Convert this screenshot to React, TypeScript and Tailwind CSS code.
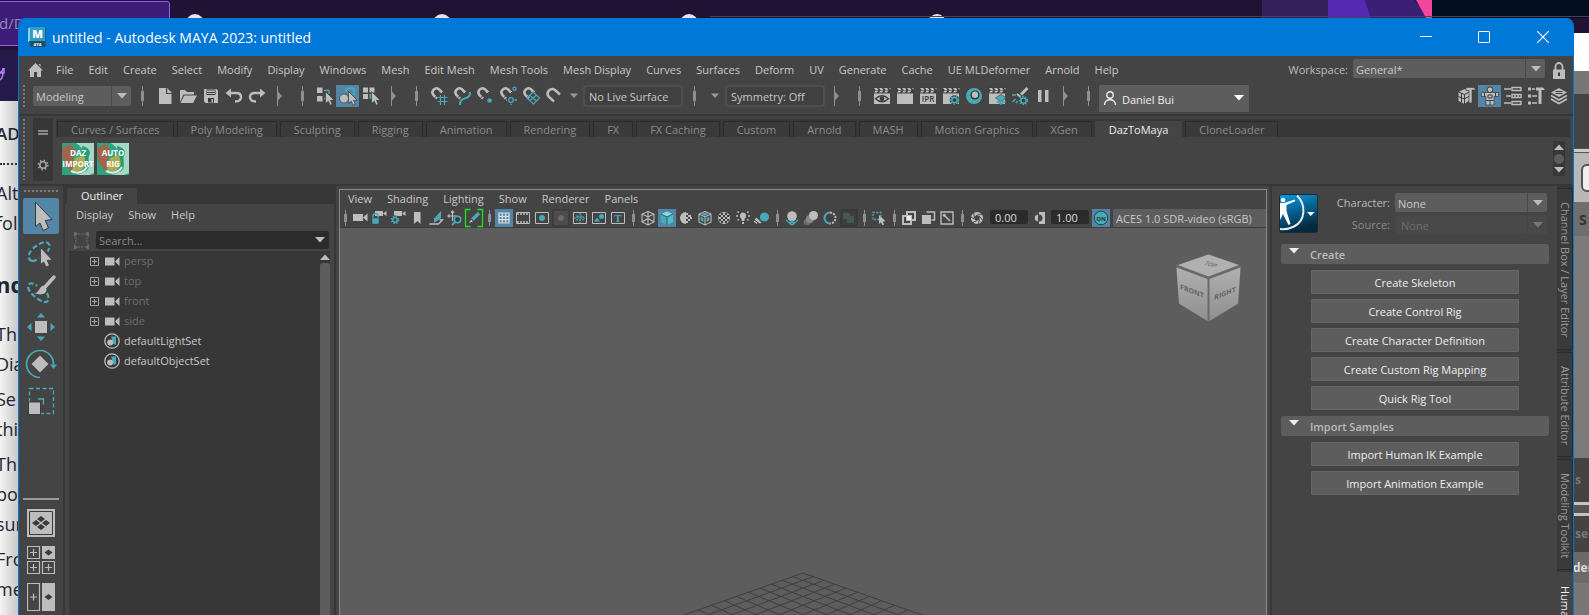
import type { ReactNode } from 'react'
import clsx from 'clsx'

const LIGHT = '#bdbdbd'
const TEAL = '#49a9b6'
const DARK = '#3a3a3a'

const menus = [
  'File', 'Edit', 'Create', 'Select', 'Modify', 'Display', 'Windows', 'Mesh', 'Edit Mesh', 'Mesh Tools',
  'Mesh Display', 'Curves', 'Surfaces', 'Deform', 'UV', 'Generate', 'Cache', 'UE MLDeformer', 'Arnold', 'Help',
]

const shelves = [
  'Curves / Surfaces', 'Poly Modeling', 'Sculpting', 'Rigging', 'Animation', 'Rendering', 'FX', 'FX Caching',
  'Custom', 'Arnold', 'MASH', 'Motion Graphics', 'XGen', 'DazToMaya', 'CloneLoader',
]

interface Tool {
  name: string
  icon: ReactNode
  active?: boolean
}

/* ---------- shared drawings ---------- */

function Svg({ size = 20, children }: { size?: number; children: ReactNode }) {
  return (
    <svg width={size} height={size} viewBox={`0 0 ${size} ${size}`} fill="none" aria-hidden="true" className="shrink-0">
      {children}
    </svg>
  )
}

function Down({ className }: { className?: string }) {
  return (
    <svg width="10" height="6" viewBox="0 0 10 6" aria-hidden="true" className={clsx('shrink-0', className)}>
      <path d="M0 0h10L5 5.5z" fill="currentColor" />
    </svg>
  )
}

const cursor = <path d="M10.5 5.5v12l2.8-2.2 1.8 4 2.2-1-1.8-3.9 3.6-.3z" fill={LIGHT} stroke={DARK} strokeWidth=".7" />

const magnet = (
  <>
    <path d="M8 12.5 4.3 8.8a4 4 0 0 1 5.6-5.6L13.5 7" stroke={LIGHT} strokeWidth="2.6" />
    <path d="m5.6 11.8 2.4-2M12 8l2.4-2.2" stroke={DARK} strokeWidth="1" />
  </>
)

const clapTop = (
  <>
    <path d="M1.5 1.5h17V7h-17z" fill={DARK} />
    <path d="M2 2h3l1.5 2H3.500zM7 2h3l1.500 2H8.500zM12 2h3l1.500 2h-3zM17 2h1.500v2zM2 6.500 3.500 4.500h3L5 6.500zM7 6.500l1.500-2h3l-1.500 2zM12 6.500l1.500-2h3l-1.500 2z" fill={LIGHT} />
  </>
)
const clap = (
  <>
    {clapTop}
    <path d="M2 7.500h16V18H2z" fill={LIGHT} />
  </>
)

function gear(cx: number, cy: number, r: number) {
  return (
    <>
      <circle cx={cx} cy={cy} r={r + 1.6} fill={DARK} />
      <circle cx={cx} cy={cy} r={r + 0.6} stroke={TEAL} strokeWidth="1.8" strokeDasharray="1.4 1.3" />
      <circle cx={cx} cy={cy} r={r - 0.6} stroke={TEAL} strokeWidth="1.5" />
    </>
  )
}

/* ---------- status line ---------- */

const fileTools: Tool[] = [
  {
    name: 'New scene',
    icon: <><path d="M4 2h7v6h5.500v10H4z" fill={LIGHT} /><path d="M12.200 2v5H17z" fill={LIGHT} /></>,
  },
  {
    name: 'Open scene',
    icon: <><path d="M2 16V4h5l2 2h7v2.500H5.500z" fill={LIGHT} /><path d="M6.300 9.500H19l-4 7.500H2.500z" fill={LIGHT} /></>,
  },
  {
    name: 'Save scene',
    icon: <><path d="M3 3h12.500L17 4.500V17H4.500L3 15.500z" fill={LIGHT} /><path d="M5.500 3.500h9V9h-9zM7 12h6v4.500H7z" fill={DARK} /><path d="M6 4.500h8v1.500H6zM6 7h8v1H6zM10.500 13H12v3h-1.500z" fill={LIGHT} /></>,
  },
  {
    name: 'Undo',
    icon: <><path d="M5 7h7.500c3 0 4.500 1.500 4.500 4s-2 4.500-6 4.500" stroke={LIGHT} strokeWidth="2.400" /><path d="m1.500 7 5.500-4.500v9z" fill={LIGHT} /></>,
  },
  {
    name: 'Redo',
    icon: <><path d="M15 7H7.500C4.500 7 3 8.500 3 11s2 4.500 6 4.500" stroke={LIGHT} strokeWidth="2.400" /><path d="M18.500 7 13 2.500v9z" fill={LIGHT} /></>,
  },
]

const selectTools: Tool[] = [
  {
    name: 'Select by hierarchy',
    icon: <><path d="M2 1.500h5.500V7H2zM2 10h5.500v5.500H2z" fill={LIGHT} /><path d="M9 4.500h5V8M9 12.500h2" stroke={TEAL} strokeWidth="1.300" />{cursor}</>,
  },
  {
    name: 'Select by object',
    active: true,
    icon: <><path d="M8 2.500h8V9M8 2.500V6" stroke={TEAL} strokeWidth="2" /><circle cx="6" cy="12.500" r="4.500" fill={LIGHT} stroke={DARK} strokeWidth=".7" />{cursor}</>,
  },
  {
    name: 'Select by component',
    icon: <><path d="M2 1.500h5V6.500H2zM8.500 1.500h5V6.500h-5zM2 8h5v5H2z" fill={LIGHT} /><path d="M8.500 8h3v5h-3z" fill={TEAL} />{cursor}</>,
  },
]

const snapTools: Tool[] = [
  { name: 'Snap to grids', icon: <>{magnet}<path d="M11.500 9v10M15.500 9v10M8.500 11.500h10M8.500 15.500h10" stroke={TEAL} strokeWidth="1.200" /></> },
  { name: 'Snap to curves', icon: <>{magnet}<path d="M8 19c0-6 3-6 6-7s4-2 4-6" stroke={TEAL} strokeWidth="2" /></> },
  { name: 'Snap to points', icon: <>{magnet}<circle cx="14.500" cy="14.500" r="2.300" fill={TEAL} /></> },
  { name: 'Snap to projected center', icon: <>{magnet}<circle cx="16.500" cy="2.800" r="1.600" stroke={TEAL} strokeWidth="1.200" /><circle cx="13" cy="14" r="2.300" stroke={TEAL} strokeWidth="1.300" /><path d="M13 17.500V19M16.500 14H19M9 14H8" stroke={TEAL} strokeWidth="1.300" /></> },
  { name: 'Snap to view planes', icon: <>{magnet}<path d="m12 6 6.500 6-6 6L6 12zM9 9.500l7 6M15 9.500l-6 5" stroke={TEAL} strokeWidth="1.200" /></> },
  { name: 'Make live', icon: <path d="M10 15.500 5 11C1 6 7 1 11 4l5 4.500" stroke={LIGHT} strokeWidth="2.500" /> },
]

const renderTools: Tool[] = [
  { name: 'Render view', icon: <>{clap}<path d="M3.500 12.700q6.500-6 13 0-6.500 6-13 0z" stroke={DARK} strokeWidth="1.300" /><circle cx="10" cy="12.700" r="2.300" fill={DARK} /></> },
  { name: 'Render frame', icon: clap },
  {
    name: 'IPR render',
    icon: <>{clap}<text x="10" y="16" textAnchor="middle" fontSize="8" fontWeight="600" fill={DARK}>IPR</text></>,
  },
  { name: 'Render settings', icon: <>{clap}{gear(13.5, 14, 3.2)}</> },
  { name: 'Hypershade', icon: <><circle cx="10" cy="10" r="8" fill={TEAL} /><circle cx="11" cy="9" r="4.600" fill="#333" /><circle cx="11" cy="8.800" r="3.200" fill={LIGHT} /></> },
  { name: 'Render setup', icon: <>{clap}<path d="m14 8.500 5.500 3.500-5.500 3.500L8.500 12z" fill={TEAL} stroke={DARK} strokeWidth=".6" /><path d="M8.500 15.500 14 19l5.500-3.500-5.500-1z" fill={TEAL} /></> },
  { name: 'Light editor', icon: <><path d="M17.500 2 11 8.500" stroke={LIGHT} strokeWidth="3" /><path d="m7 8 5 4" stroke={LIGHT} strokeWidth="2" /><path d="M2 9h4M2.500 16l3-3M6 17l1.500-2" stroke={TEAL} strokeWidth="1.500" />{gear(13.5, 14.5, 3.2)}</> },
  { name: 'Pause viewport', icon: <path d="M5 4h3.500v12H5zM12 4h3.500v12H12z" fill={LIGHT} /> },
]

const sidebarTools: Tool[] = [
  { name: 'Modeling toolkit', icon: <><path d="m1.500 6 6-3 5 2v9l-5 4-6-3z" fill={LIGHT} /><path d="m1.500 6 6 2.500L13 5.500M7.500 8.500V18M1.500 10.500l6 2.500 5-3M4.500 7v9.500" stroke={DARK} strokeWidth="1" /><path d="M9 1.500h8l2 2.500h-4v13h-3V4.500H9z" fill={LIGHT} stroke={DARK} strokeWidth=".6" /></> },
  { name: 'Human IK', active: true, icon: <><path d="M1.500 6.500h17v4h-4.500V19H6v-8.500H1.500z" fill={LIGHT} stroke={DARK} strokeWidth=".7" /><circle cx="10" cy="3.700" r="2.800" fill={LIGHT} stroke={DARK} strokeWidth="1" /><path d="M4.500 6.500v4M15.500 6.500v4M8 9h4v3H8zM10 14.500V19M6.500 14.500h7" stroke={DARK} strokeWidth="1" /></> },
  { name: 'Attribute editor', icon: <path d="M1 3h7M3 10h5M1 17h7M9 1.500h9v3H9zM9 15.500h9v3H9zM9 8.500h9v3H9zM12 8v4M15 8v4" stroke={LIGHT} strokeWidth="1.400" /> },
  { name: 'Tool settings', icon: <><path d="M2 1.500h3v3H2zM2 8.500h3v3H2zM2 15.500h3v3H2zM10 1.500h7l2 2.500h-3.500v14h-3V4.500H10z" fill={LIGHT} /><path d="M6 3h3M6 10h5M6 17h5" stroke={LIGHT} strokeWidth="1.300" /></> },
  { name: 'Channel box', icon: <><path d="m10 2 8 4.500-8 4.500-8-4.500z" fill={LIGHT} /><path d="M6.500 5.500h7M6.500 7.500h7" stroke={DARK} /><path d="m2 9.500 8 4.500 8-4.500M2 13l8 4.500 8-4.500" stroke={LIGHT} strokeWidth="1.700" /></> },
]

/* ---------- viewport panel toolbar ---------- */

const cube = 'M8 1.500 14 4v8l-6 3-6-3V4z'
const smallCam = <path d="M4 1h8v5H4zM12 3.500 15.500 1v5z" fill={LIGHT} />

const cameraTools: Tool[] = [
  { name: 'Select camera', icon: <path d="M1 4h10v7H1zM11 7.500 15.500 3.500v8z" fill={LIGHT} /> },
  { name: 'Lock camera', icon: <>{smallCam}<path d="M2 8V6a2.500 2.500 0 0 1 5 0v2" stroke={TEAL} strokeWidth="1.500" /><path d="M1 8h7v6H1z" fill={TEAL} stroke={DARK} strokeWidth=".5" /></> },
  { name: 'Camera attributes', icon: <>{smallCam}{gear(5, 10, 2.8)}</> },
  { name: 'Bookmarks', icon: <path d="M5 2h6.500v12L8.300 11 5 14z" fill={LIGHT} /> },
  { name: 'Image plane', icon: <><path d="M1.500 14h9l4-4h-3" stroke={LIGHT} strokeWidth="1.300" /><path d="M6 8.500 13 1v7l-7 5z" fill={TEAL} /></> },
  { name: 'Pan and zoom', icon: <><path d="M1 6h9M5.500 1v10M4 2.500 5.500 1 7 2.500M2.500 4.500 1 6l1.500 1.500" stroke={LIGHT} strokeWidth="1.200" /><circle cx="10.500" cy="9.500" r="3.200" fill={DARK} stroke={TEAL} strokeWidth="1.600" /><path d="m8 12-3 3" stroke={TEAL} strokeWidth="1.800" /></> },
  { name: 'Grease pencil', icon: <><path d="M4.500-.5h-5v17h5M11.500-.5h5v17h-5" stroke="#1fe01f" strokeWidth="1.300" /><path d="m13 3-6.500 6.500" stroke={TEAL} strokeWidth="3.600" /><path d="m5 9.500 2 2-4 1.500z" fill={LIGHT} /></> },
]

const gateTools: Tool[] = [
  { name: 'Grid', active: true, icon: <path d="M3 3h10v10H3zM3 6.300h10M3 9.700h10M6.300 3v10M9.700 3v10" stroke="#e0e0e0" strokeWidth="1.200" /> },
  { name: 'Film gate', icon: <><path d="M1.500 2.500h13v11h-13z" stroke={LIGHT} /><path d="M2 4h12M2 12h12" stroke={LIGHT} strokeWidth="1.500" strokeDasharray="2 1" /></> },
  { name: 'Resolution gate', icon: <><path d="M1.500 2.500h13v11h-13z" stroke={LIGHT} /><circle cx="8" cy="8" r="3" fill={TEAL} /></> },
  { name: 'Gate mask', icon: <><path d="M0 0h16v16H0z" fill="#4c4c4c" stroke="#333" /><circle cx="8" cy="8" r="3" fill="#6a6a6a" /></> },
  { name: 'Field chart', icon: <><path d="M1.500 2.500h13v11h-13z" stroke={LIGHT} /><path d="M8 3v10M2 8h12M5 6h6v4H5z" stroke={TEAL} strokeWidth="1.200" strokeDasharray="2 1" /></> },
  { name: 'Safe action', icon: <><path d="M1.500 2.500h13v11h-13z" stroke={LIGHT} /><circle cx="10.500" cy="6.500" r="2.500" fill={TEAL} /><path d="m3 11.500 3-4 3 4z" fill={TEAL} /></> },
  { name: 'Safe title', icon: <><path d="M1.500 2.500h13v11h-13z" stroke={LIGHT} /><text x="8" y="12" textAnchor="middle" fontSize="11" fontWeight="700" fill={TEAL} className="font-['Liberation_Serif',serif]">T</text></> },
]

const shadeTools: Tool[] = [
  { name: 'Wireframe', icon: <path d={`${cube}M2 4l6 3 6-3M8 7v8M8 1.500v6M2 12l6-3.500 6 3.500`} stroke={LIGHT} strokeWidth="1.100" /> },
  { name: 'Smooth shade', active: true, icon: <><path d={cube} fill={TEAL} /><path d="M8 1.500 14 4 8 7 2 4z" fill="#7fdbe6" /><path d="M8 7v8l6-3V4z" fill="#4fbccb" /><path d="M2 4l6 3 6-3M8 7v8" stroke="#2f5b6d" /></> },
  { name: 'Default material', icon: <><path d="M8 2a6 6 0 0 0 0 12z" fill={LIGHT} /><path d="M8 3h2v2H8zM10 5h2v2h-2zM12 5h1v2h-1zM8 7h2v2H8zM12 7h2v2h-2zM10 9h2v2h-2zM8 11h2v2H8z" fill={LIGHT} /></> },
  { name: 'Wireframe on shaded', icon: <><path d={cube} fill={DARK} /><path d="M8 2.500 11.500 4 8 6 4.500 4zM3.500 6.500 6.500 8v4l-3-1.500zM12.500 6.500 9.500 8v4l3-1.500z" fill={TEAL} /><path d={`${cube}M2 4l6 3 6-3M8 7v8`} stroke={LIGHT} strokeWidth="1.100" /></> },
  { name: 'Textured', icon: <><circle cx="8" cy="8" r="6" fill={LIGHT} /><path d="M5 3h2v2H5zM9 3h2v2H9zM3 5h2v2H3zM7 5h2v2H7zM11 5h2v2h-2zM5 7h2v2H5zM9 7h2v2H9zM3 9h2v2H3zM7 9h2v2H7zM11 9h2v2h-2zM5 11h2v2H5zM9 11h2v2H9z" fill={DARK} /></> },
  { name: 'Use all lights', icon: <><path d="M8 2.500a3.500 3.500 0 0 1 1.500 6.500v2h-3V9A3.500 3.500 0 0 1 8 2.500zM7 12h2v2H7z" fill={LIGHT} /><path d="M1 6h2M13 6h2M2.500 1.500l1.300 1.300M13.500 1.500l-1.300 1.300M2.500 10.500l1.300-1.300M13.500 10.500l-1.300-1.300" stroke={LIGHT} strokeWidth="1.400" /></> },
  { name: 'Shadows', icon: <><circle cx="10.500" cy="7" r="4.600" fill={TEAL} /><path d="m1 9 5 4M2 8l5 5M0 11l3 2.500" stroke={LIGHT} strokeWidth="1.200" /></> },
]

const effectTools: Tool[] = [
  { name: 'Ambient occlusion', icon: <><path d="m2 10 6 5 6-5M4 9l7 5M12 9l-7 5" stroke={TEAL} strokeWidth="1.200" /><circle cx="8" cy="6" r="4.800" fill={LIGHT} /></> },
  { name: 'Motion blur', icon: <><circle cx="4" cy="12" r="3.300" fill="#6c6c6c" /><circle cx="7" cy="9" r="4" fill="#888" /><circle cx="10.500" cy="5.500" r="4.500" fill={LIGHT} /></> },
  { name: 'Anti-aliasing', icon: <><path d="M8 2.500a5.500 5.500 0 0 0 0 11" stroke={TEAL} strokeWidth="2" /><path d="M8 2.500a5.500 5.500 0 0 1 0 11" stroke={LIGHT} strokeWidth="2" strokeDasharray="2 1.200" /></> },
  { name: 'Depth of field', icon: <><path d="M0 0h16v16H0z" fill="#3e3e3e" stroke="#333" /><path d="M2 3h7v6H2zM6 6h7v7H6z" fill="#45565a" /></> },
]

const isolateTools: Tool[] = [
  { name: 'Isolate select', icon: <><path d="M2 2.500h8v7H2z" stroke={TEAL} strokeWidth="1.300" strokeDasharray="2 1.300" /><path d="M8 5v9l2-1.700 1.400 2.900 1.700-.8-1.400-2.900 2.800-.2z" fill={LIGHT} /></> },
]

const xrayTools: Tool[] = [
  { name: 'X-Ray', icon: <><path d="M6 2h8v8H6zM2 6h8v8H2z" stroke={LIGHT} strokeWidth="2" /><path d="M6 6h4v4H6z" fill="#eee" /></> },
  { name: 'X-Ray joints', icon: <><path d="M6.500 2h8v8h-3" stroke={LIGHT} strokeWidth="1.500" /><path d="M2 5h9v9H2z" fill={LIGHT} /></> },
  { name: 'X-Ray active', icon: <><path d="M2 2h12v12H2z" stroke={LIGHT} strokeWidth="1.400" /><path d="m5 5 6 6" stroke={LIGHT} strokeWidth="1.600" /><circle cx="5.300" cy="5.300" r="1.500" fill={LIGHT} /></> },
]

/* ---------- small building blocks ---------- */

function Sep() {
  return (
    <span className="flex w-[22px] shrink-0 justify-center" aria-hidden="true">
      <svg width="3" height="20"><path d="M1 0h1v20H1zM0 5h3v10H0z" fill="#8f8f8f" /></svg>
    </span>
  )
}

function Fold() {
  return (
    <span className="flex w-[23px] shrink-0 justify-center" aria-hidden="true">
      <svg width="5" height="20"><path d="M0 0h1v20H0zM1 5.500 5 10l-4 4.500z" fill="#8f8f8f" /></svg>
    </span>
  )
}

function StatusTools({ tools }: { tools: Tool[] }) {
  return tools.map((t) => (
    <button
      key={t.name}
      aria-label={t.name}
      className={clsx('flex h-[22px] w-[23px] shrink-0 items-center justify-center', t.active && 'bg-[#5285a6]')}
    >
      <Svg>{t.icon}</Svg>
    </button>
  ))
}

function PanelTools({ tools }: { tools: Tool[] }) {
  return tools.map((t) => (
    <button
      key={t.name}
      aria-label={t.name}
      className={clsx('mr-px flex size-[18px] shrink-0 items-center justify-center', t.active && 'bg-[#5285a6]')}
    >
      <svg width="16" height="16" viewBox="0 0 16 16" fill="none" aria-hidden="true" className="shrink-0 overflow-visible">
        {t.icon}
      </svg>
    </button>
  ))
}

function PanelSep() {
  return (
    <span className="flex w-[11px] shrink-0 justify-center" aria-hidden="true">
      <svg width="3" height="16"><path d="M1 0h1v16H1zM0 4h3v8H0z" fill="#8f8f8f" /></svg>
    </span>
  )
}

interface ComboProps {
  label: string
  value: string
  className: string
  dim?: boolean
  id?: string
}

function Combo({ label, value, className, dim, id }: ComboProps) {
  return (
    <div className={clsx('relative rounded-[2px]', dim ? 'bg-[#494949] text-[#6e6e6e]' : 'bg-[#5d5d5d] text-[#c8c8c8]', className)}>
      <select
        id={id}
        aria-label={label}
        disabled={dim}
        className={clsx('h-full w-full appearance-none pt-0.5 pr-5 outline-none', dim ? 'pl-[6px]' : 'pl-[3px]')}
      >
        <option>{value}</option>
      </select>
      <span
        className={clsx(
          'pointer-events-none absolute inset-y-0 right-0 flex w-5 items-center justify-center border-l',
          dim ? 'border-[#464646] text-[#777]' : 'border-[#494949] text-[#bdbdbd]',
        )}
      >
        <Down />
      </span>
    </div>
  )
}

const dotsV = 'bg-[radial-gradient(circle,#7d7d7d_0.8px,transparent_1px)] bg-[size:4px_4px]'

/* ---------- desktop behind the window ---------- */

function Desktop() {
  return (
    <div className="absolute inset-0 overflow-hidden bg-[#1f1235]" aria-hidden="true">
      <svg className="absolute top-0 left-0" width="100%" height="18">
        <path d="M1262 0h66v18h-66z" fill="#35205e" />
        <path d="M1328 0h37l6 18h-43z" fill="#5429b4" />
        <path d="M1365 0h50l12 18h-56z" fill="#3b1f74" />
        <path d="M1416 0h16v18h-6z" fill="#f2479c" />
        <path d="M1432 0h400v18h-400z" fill="#020d20" />
        {[195, 442, 689, 937].map((x) => (
          <circle key={x} cx={x} cy="23" r="9" fill="#e8e4ec" />
        ))}
        <path d="M710 16.500h1200" stroke="#47425a" />
      </svg>
      <div className="absolute top-px -left-2 flex h-[45px] w-[178px] items-center rounded-[3px] border border-[#9a5ce6] bg-[#3c1d78] pl-1.5 font-['Open_Sans',sans-serif] text-[15px] text-[#9a86b8]">
        d/D
      </div>
      <div className="mt-[50px] h-[51px] w-5 bg-[#251a4a]">
        <svg width="10" height="51"><path d="M-4 20c4 4 7 2 7-2M-4 31c6 0 7-5 7-9M-1 23h5v-5" fill="none" stroke="#b47cf5" strokeWidth="1.500" /></svg>
      </div>
      <div className="h-full w-5 overflow-hidden bg-linear-to-r from-[#f4f4f4] to-[#c4c4c4] pt-[18px] font-['Open_Sans',sans-serif] text-[18px] leading-[30px] whitespace-nowrap text-[#1f2530] [&>p]:-ml-1 [&>p]:mb-[5px]">
        <p className="text-[17px] font-semibold">AD</p>
        <div className="mt-3.5 mb-[13px] h-0 border-t-2 border-dotted border-[#333]" />
        <p>Alt<br />fol</p>
        <p className="pt-[26px] text-[22px] font-bold">nd</p>
        <p className="pt-[15px]">Th<br />Dia</p>
        <p>Se<br />thi</p>
        <p>Th<br />po<br />sur</p>
        <p>Fro<br />me</p>
      </div>
      <div className="absolute top-0 right-0 flex h-full w-4 flex-col overflow-hidden pt-[33px] pl-1 font-['Open_Sans',sans-serif] text-[12px] font-bold [&>div]:-ml-1 [&>div]:shrink-0">
        <div className="h-[38px] bg-white" />
        <div className="h-[23px] bg-[#777]" />
        <div className="h-[54px] bg-[#444]" />
        <div className="h-[5px] border-y border-[#555] bg-[#ccc]" />
        <div className="flex h-[49px] items-center bg-[#b8b8b8] pl-2">
          <span className="h-7 w-6 shrink-0 rounded-[6px] border-2 border-[#555] bg-[#eee]" />
        </div>
        <div className="flex h-[34px] items-center bg-[#6e6e6e] pl-1.5 text-[14px] text-[#333]">S</div>
        <div className="h-[222px] bg-[#7b7b7b]" />
        <div className="flex h-[44px] items-center bg-[#434343] pl-0.5 text-[#777]">s</div>
        <div className="h-[14px] border-y-3 border-[#c4c4c4] bg-[#555]" />
        <div className="flex h-[36px] items-center bg-[#434343] pl-0.5 text-[#777]">se</div>
        <div className="flex h-[31px] items-center bg-[#6a6a6a] text-[#ddd]">der</div>
        <div className="h-16 bg-[#777]" />
      </div>
    </div>
  )
}

/* ---------- window parts ---------- */

function TitleBar() {
  return (
    <header className="flex h-[38px] shrink-0 items-center bg-[#0078d7] pl-2 text-white">
      <svg width="20" height="20" viewBox="0 0 20 20" aria-hidden="true">
        <path d="M1 1.500 4 0v14l-3 1z" fill="#8fd3e4" />
        <path d="M3 0h15v14H3z" fill="#2e9fc4" />
        <path d="M18 0l1 1v18l-1 1z" fill="#1c5f80" />
        <path d="M2 14h16v6H4z" fill="#1d4e66" />
        <text x="10.500" y="11" textAnchor="middle" fontSize="11" fontWeight="800" fill="#fff">M</text>
        <text x="10.500" y="18.500" textAnchor="middle" fontSize="4" fontWeight="700" fill="#fff">AYA</text>
      </svg>
      <h1 className="ml-[5px] pt-0.5 text-[14px]">untitled - Autodesk MAYA 2023: untitled</h1>
      <div className="ml-auto flex h-full">
        <button aria-label="Minimize" className="flex w-[58px] items-center justify-center">
          <svg width="12" height="12"><path d="M0 5.500h12" stroke="#fff" /></svg>
        </button>
        <button aria-label="Maximize" className="flex w-[58px] items-center justify-center">
          <svg width="12" height="12"><rect x=".5" y=".5" width="11" height="11" rx=".5" fill="none" stroke="#fff" /></svg>
        </button>
        <button aria-label="Close" className="flex w-[60px] items-center justify-center">
          <svg width="12" height="12"><path d="m0 0 12 12M12 0 0 12" stroke="#fff" strokeWidth="1.200" /></svg>
        </button>
      </div>
    </header>
  )
}

function MenuBar() {
  return (
    <div className="flex h-7 shrink-0 items-center pr-2 pl-2">
      <button aria-label="Home" className="mr-[13px]">
        <svg width="15" height="14" viewBox="0 0 15 14" aria-hidden="true">
          <path d="M7.500 0 15 7.500h-2V14H9V9H6v5H2V7.500H0zM10.500 1h2v3z" fill={LIGHT} />
        </svg>
      </button>
      <nav className="flex gap-[15px] whitespace-nowrap text-[#c8c8c8]">
        {menus.map((m) => (
          <button key={m}>{m}</button>
        ))}
      </nav>
      <label htmlFor="workspace" className="ml-auto text-[#bbb]">Workspace:</label>
      <Combo id="workspace" label="Workspace" value="General*" className="mb-[3px] ml-[5px] h-[19px] w-[192px]" />
      <button aria-label="Lock workspace" className="ml-2">
        <svg width="12" height="17" viewBox="0 0 12 17" aria-hidden="true">
          <path d="M2.500 8V4.500a3.500 3.500 0 0 1 7 0V8" fill="none" stroke={LIGHT} strokeWidth="1.800" />
          <path d="M0 7.500h12V17H0z" fill={LIGHT} />
          <path d="M5 10.500h2v3.500H5z" fill={DARK} />
        </svg>
      </button>
    </div>
  )
}

const field = 'h-[22px] w-[100px] shrink-0 rounded-[3px] border-2 border-[#4f4f4f] bg-[#404040] px-1 pt-px text-[#c8c8c8] outline-none'

function StatusLine() {
  return (
    <div className="flex h-[30px] shrink-0 items-center pr-[3px] pb-1.5 pl-0.5">
      <div className={clsx('h-6 w-[5px] shrink-0', dotsV)} />
      <Combo label="Menu set" value="Modeling" className="ml-1.5 h-5 w-[98px] shrink-0" />
      <Sep />
      <StatusTools tools={fileTools} />
      <Fold />
      <Sep />
      <StatusTools tools={selectTools} />
      <Fold />
      <Sep />
      <StatusTools tools={snapTools} />
      <button aria-label="Live surface options" className="flex w-[18px] shrink-0 justify-center text-[#999]">
        <Down className="w-2" />
      </button>
      <input aria-label="Live surface" defaultValue="No Live Surface" className={field} />
      <Sep />
      <button aria-label="Symmetry options" className="flex w-5 shrink-0 justify-center text-[#999]">
        <Down className="w-2" />
      </button>
      <input aria-label="Symmetry" defaultValue="Symmetry: Off" className={field} />
      <Fold />
      <Sep />
      <StatusTools tools={renderTools} />
      <Fold />
      <Sep />
      <button className="mt-px flex h-[27px] w-[150px] shrink-0 items-center self-start bg-[#5d5d5d] pr-[5px] pl-1 text-[#eee]">
        <svg width="14" height="15" viewBox="0 0 14 15" fill="none" stroke="#eee" strokeWidth="1.400" aria-hidden="true">
          <circle cx="7" cy="4" r="3.200" />
          <path d="M1.500 14c0-7 11-7 11 0" />
        </svg>
        <span className="ml-[5px] pt-0.5 text-[11px]">Daniel Bui</span>
        <Down className="mb-0.5 ml-auto text-white" />
      </button>
      <div className="ml-auto flex">
        <StatusTools tools={sidebarTools} />
      </div>
    </div>
  )
}

function DazIcon({ label, lines }: { label: string; lines: [string, string] }) {
  return (
    <button aria-label={label}>
      <svg width="32" height="32" viewBox="0 0 32 32" aria-hidden="true" className="overflow-hidden">
        <path d="M0 0h32v32H0z" fill="#2ea380" />
        <path d="M14 0h18v30l-5 2H14c10-2 12-6 12-12s-4-14-12-20z" fill="#a5d8c4" />
        <path d="M20 3c8 2 9 6 7 10s3 12-4 16" fill="#249c78" />
        <path d="M0 5l8-4 5 5-2 11 5 5-4 6-6-2-5-9z" fill="#a1644c" />
        <path d="M13 15l9-3 2 9-6 8-8-1z" fill="#a9ac50" />
        <path d="M9 28c8 4 14 0 16-4" stroke="#d9efe6" strokeWidth="2" fill="none" />
        <text x="16" y="13" textAnchor="middle" fontSize="8" fontWeight="700" fill="#fff">{lines[0]}</text>
        <text x="16" y="24" textAnchor="middle" fontSize="8" fontWeight="700" fill="#fff">{lines[1]}</text>
      </svg>
    </button>
  )
}

function Shelf() {
  return (
    <div className="flex h-[68px] shrink-0 pt-0.5 pr-[3px] pl-0.5">
      <div className={clsx('h-[62px] w-[5px] shrink-0', dotsV)} />
      <div className="ml-1.5 flex h-[63px] w-5 shrink-0 flex-col items-center bg-[#373737] pt-3">
        <button aria-label="Shelf tabs"><svg width="10" height="5"><path d="M0 0h10v2H0zM0 3h10v2H0z" fill="#8a8a8a" /></svg></button>
        <button aria-label="Shelf options" className="mt-auto mb-2.5">
          <svg width="12" height="12" fill="none" stroke="#a5a5a5">
            <circle cx="6" cy="6" r="3.200" strokeWidth="1.500" />
            <circle cx="6" cy="6" r="4.700" strokeWidth="1.600" strokeDasharray="1.500 2.200" />
          </svg>
        </button>
      </div>
      <div className="mt-px ml-[3px] flex min-w-0 flex-1 flex-col">
        <div role="tablist" className="flex h-[18px] items-end gap-[3px] bg-[#373737] pl-px whitespace-nowrap">
          {shelves.map((s) => (
            <button
              key={s}
              role="tab"
              aria-selected={s === 'DazToMaya'}
              className={clsx(
                'h-4 rounded-t-[2px] border border-b-0 px-[13px] leading-4',
                s === 'DazToMaya' ? 'border-[#444] bg-[#444] text-[#eee]' : 'border-[#2b2b2b] bg-[#3a3a3a] text-[#8c8c8c]',
              )}
            >
              {s}
            </button>
          ))}
        </div>
        <div className="flex gap-[3px] pt-[5px] pr-[5px] pl-1.5">
          <DazIcon label="Daz Import" lines={['DAZ', 'IMPORT']} />
          <DazIcon label="Auto Rig" lines={['AUTO', 'RIG']} />
          <div className="-mt-px ml-auto flex h-[35px] w-3 flex-col items-center justify-between bg-[#373737] py-[3px] text-[#bdbdbd]">
            <button aria-label="Previous shelf row"><Down className="rotate-180" /></button>
            <span className="size-[10px] rounded-full bg-[#5d5d5d]" />
            <button aria-label="Next shelf row"><Down /></button>
          </div>
        </div>
      </div>
    </div>
  )
}

const toolbox: Tool[] = [
  {
    name: 'Select tool',
    active: true,
    icon: <path d="M12.500 4v24.500l4.500-3.500 3 7.500 5.500-2.500-3.200-7.500 6.700-1z" fill={LIGHT} stroke={DARK} strokeWidth="1" />,
  },
  {
    name: 'Lasso tool',
    icon: <><path d="M9 26c-4-1-5-7 1-12.500s13-8 15.500-5c2 2 1 5-1 8M9 26c3 0 5-1 7-3" stroke={TEAL} strokeWidth="2.200" strokeDasharray="5 2.500" /><path d="M17.500 12.500v17l3.200-2.500 2.300 5 3.500-1.600-2.300-5 5-.4z" fill={LIGHT} stroke={DARK} strokeWidth=".8" /></>,
  },
  {
    name: 'Paint selection tool',
    icon: <><path d="M24 21c3 6 1 10-3 9S6 22 5 15c0-5 6-4 9-1" stroke={TEAL} strokeWidth="2.200" strokeDasharray="5 2.500" /><path d="M31 5 22 15" stroke={LIGHT} strokeWidth="3.500" strokeLinecap="round" /><path d="M20 13.500 23.500 17c0 6-6 6-12 4.500 5-1 4-6 8.500-8z" fill={LIGHT} /></>,
  },
  {
    name: 'Move tool',
    icon: <><path d="M12 12h12v12H12z" fill={LIGHT} /><path d="m18 4 4 4.500h-8zM18 32l4-4.500h-8zM4 18l4.500-4v8zM32 18l-4.500-4v8z" fill={TEAL} /></>,
  },
  {
    name: 'Rotate tool',
    icon: <><path d="M17 31.500a13.500 13.500 0 1 1 13.500-13" stroke={TEAL} strokeWidth="1.700" /><path d="m30.500 23-3.500-4.500h7z" fill={TEAL} /><path d="m17 9.500 8.500 8.500-8.500 8.500L8.500 18z" fill={LIGHT} /></>,
  },
  {
    name: 'Scale tool',
    icon: <><path d="M6.500 5.500h24v25h-24z" stroke={TEAL} strokeWidth="1.300" strokeDasharray="4 2.500" /><path d="M15 16h5.500v5.500" stroke={TEAL} strokeWidth="1.300" /><path d="M5.500 19h12v12.500h-12z" fill={LIGHT} stroke={DARK} /></>,
  },
]

const layouts: Tool[] = [
  {
    name: 'Single view',
    icon: <><path d="M0 0h28v28H0z" fill={LIGHT} /><path d="M2.500 2.500h23v23h-23z" stroke={DARK} /><path d="m14 7 4 3-4 3-4-3zM14 15l4 3-4 3-4-3zM9 11l4 3-4 3-4-3zM19 11l4 3-4 3-4-3z" fill={DARK} /></>,
  },
  {
    name: 'Four view',
    icon: <><path d="M.5.500h12v12H.5zM.5 15.500h12v12H.5zM15.500 15.500h12v12h-12zM6.500 3v7M3 6.500h7M6.500 18v7M3 21.500h7M21.500 18v7M18 21.500h7" stroke={LIGHT} strokeWidth="1.200" /><path d="M15 0h13v13H15z" fill={LIGHT} /><path d="m21.500 3.500 4 3-4 3-4-3z" fill={DARK} /></>,
  },
  {
    name: 'Outliner and view',
    icon: <><path d="M.5.500h12v27H.5zM6.500 10.500v7M3 14h7" stroke={LIGHT} strokeWidth="1.200" /><path d="M15 0h13v28H15z" fill={LIGHT} /><path d="m21.500 11 4 3-4 3-4-3z" fill={DARK} /></>,
  },
]

function Toolbox() {
  return (
    <aside className="flex w-[43px] shrink-0 flex-col pt-[3px] pl-[3px]">
      <div className={clsx('mb-1 h-[5px] w-9', dotsV)} />
      <div className="flex flex-col gap-px">
        {toolbox.map((t) => (
          <button key={t.name} aria-label={t.name} className={clsx('size-9 rounded-[2px]', t.active && 'bg-[#5285a6]')}>
            <Svg size={36}>{t.icon}</Svg>
          </button>
        ))}
      </div>
      <div className="mt-[79px] h-0.5 w-9 shrink-0 bg-[#999]" />
      <div className="flex flex-col gap-[9px] pt-[9px] pl-1">
        {layouts.map((t) => (
          <button key={t.name} aria-label={t.name} className="size-7">
            <Svg size={28}>{t.icon}</Svg>
          </button>
        ))}
      </div>
    </aside>
  )
}

function Outliner() {
  return (
    <section className="flex w-[269px] shrink-0 flex-col">
      <div className="flex bg-[#373737] pt-0.5 pl-0.5">
        <button role="tab" aria-selected="true" className="h-4 w-[70px] rounded-t-[2px] bg-[#444] leading-4 text-[#eee]">
          Outliner
        </button>
      </div>
      <nav className="flex h-[22px] items-center gap-[15px] pl-[11px] text-[#c8c8c8]">
        <button>Display</button>
        <button>Show</button>
        <button>Help</button>
      </nav>
      <div className="mt-[5px] flex items-center pr-[5px] pl-[9px]">
        <svg width="15" height="17" fill="none" aria-hidden="true">
          <path d="M4 2h7M2 5v7M13 5v7M4 15h7" stroke="#6a6a6a" strokeDasharray="2 1" />
          <path d="M0 0h2l2 2-4 3zM15 0v5l-4-3 2-2zM0 12l4 3-2 2H0zM15 17h-2l-2-2 4-3z" fill="#6a6a6a" />
        </svg>
        <div className="ml-[7px] flex h-[18px] flex-1 items-center rounded-[2px] bg-[#2b2b2b] pr-1">
          <input aria-label="Search" placeholder="Search..." className="min-w-0 flex-1 pt-px pl-[3px] text-[#ccc] outline-none placeholder:text-[#8a8a8a]" />
          <button aria-label="Search history" className="text-[#bdbdbd]"><Down /></button>
        </div>
      </div>
      <div className="mt-0.5 mr-1 ml-1 flex min-h-0 flex-1 bg-[#373737]">
        <ul className="flex-1 leading-5">
          {['persp', 'top', 'front', 'side'].map((c) => (
            <li key={c} className="flex h-5 items-center pl-[21px] text-[#6e6e6e]">
              <svg width="9" height="9" fill="none" stroke="#a5a5a5" aria-hidden="true"><path d="M.5.500h8v8h-8zM2 4.500h5M4.500 2v5" /></svg>
              <svg width="15" height="9" className="mr-1 ml-1.5" aria-hidden="true"><path d="M0 .5h9.500v8H0zM10 4.500 14.500 0v9z" fill={LIGHT} /></svg>
              {c}
            </li>
          ))}
          {['defaultLightSet', 'defaultObjectSet'].map((s) => (
            <li key={s} className="flex h-5 items-center pl-[35px] text-[#c8c8c8]">
              <svg width="16" height="16" fill="none" className="mr-1" aria-hidden="true">
                <circle cx="8" cy="8" r="7.200" stroke={LIGHT} strokeWidth="1.300" />
                <path d="M7 3.500h5v8H9.500z" fill={TEAL} />
                <circle cx="6.200" cy="9.500" r="3" fill={LIGHT} />
              </svg>
              {s}
            </li>
          ))}
        </ul>
        <div className="flex w-[10px] flex-col items-center pt-[3px] text-[#bdbdbd]">
          <Down className="rotate-180" />
          <div className="mt-[3px] w-full flex-1 rounded-t-[3px] bg-[#5d5d5d]" />
        </div>
      </div>
    </section>
  )
}

// floor grid seen corner-on; u runs away from the far corner, v across
function project(i: number, j: number): string {
  const u = i + j
  const d = 1 - 0.01456 * u
  return `${(160 + ((i - j) * 10.1) / d).toFixed(1)} ${(1 + (u * 3.56) / d).toFixed(1)}`
}

function FloorGrid() {
  const n = 14
  let d = ''
  for (let i = 0; i <= n; i++) {
    d += `M${project(i, 0)}L${project(i, n)}M${project(0, i)}L${project(n, i)}`
  }
  return (
    <svg width="320" height="43" className="overflow-hidden" aria-hidden="true">
      <path d={d} fill="none" stroke="#3f3f3f" />
    </svg>
  )
}

function ViewCube() {
  return (
    <svg width="68" height="70" viewBox="0 0 68 70" className="mt-[25px] mr-[23px] self-end" role="img" aria-label="View cube">
      <defs>
        <linearGradient id="face" x2="0" y2="1">
          <stop stopColor="#b0b0b0" />
          <stop offset="1" stopColor="#8f8f8f" />
        </linearGradient>
      </defs>
      <path d="M1 12.500 33.500 1 66 12.500 63.500 51 33.500 69 4 51z" fill="#6a6a6a" />
      <path d="M3 12 33.500 1.500 64 12 33.500 23.500z" fill="#b0b0b0" />
      <path d="M1.500 14.500 32.500 26v42L4 50.500z" fill="url(#face)" />
      <path d="M65.500 14.500 34.500 26v42L63 50.500z" fill="url(#face)" />
      <g fontSize="7" fontWeight="700" fill="#636363">
        <text x="17" y="34" textAnchor="middle" transform="skewY(21)">FRONT</text>
        <text x="50" y="62" textAnchor="middle" transform="skewY(-21)">RIGHT</text>
        <text x="0" y="0" textAnchor="middle" fontSize="6" fill="#7d7d7d" transform="translate(34 13) rotate(18) skewX(-30)">TOP</text>
      </g>
    </svg>
  )
}

function Viewport() {
  return (
    <main className="flex min-w-0 flex-1 px-[3px] pt-[3px]">
      <div className="flex min-w-0 flex-1 flex-col border border-b-0 border-[#8a8a8a]">
        <nav className="flex h-[19px] shrink-0 items-center gap-[15px] pb-px pl-2 text-[#c8c8c8]">
          {['View', 'Shading', 'Lighting', 'Show', 'Renderer', 'Panels'].map((m) => (
            <button key={m}>{m}</button>
          ))}
        </nav>
        <div className="flex h-[19px] shrink-0 items-start border-b border-[#3c3c3c]">
          <div className="flex h-[18px] items-center">
            <PanelSep />
            <PanelTools tools={cameraTools} />
            <PanelSep />
            <PanelTools tools={gateTools} />
            <PanelSep />
            <PanelTools tools={shadeTools} />
            <PanelSep />
            <PanelTools tools={effectTools} />
            <PanelSep />
            <PanelTools tools={isolateTools} />
            <PanelSep />
            <PanelTools tools={xrayTools} />
            <PanelSep />
          </div>
          <button aria-label="Exposure" className="mr-1 ml-0.5 flex h-[18px] w-4 shrink-0 items-center">
            <svg width="14" height="14" fill="none" aria-hidden="true">
              <circle cx="7" cy="7" r="4.300" stroke={LIGHT} strokeWidth="3.600" />
              <path d="m4.500 7-1-6M6 4.500 12 3M9 5l3.500 4M9.500 8.500 8 14M7 9.500 2 12M4.500 8 1 6" stroke={DARK} strokeWidth=".9" />
            </svg>
          </button>
          <input aria-label="Exposure value" defaultValue="0.00" className="mt-px h-[14px] w-[38px] shrink-0 rounded-[2px] bg-[#2b2b2b] pt-px pl-[5px] text-[#ddd] outline-none" />
          <button aria-label="Gamma" className="mx-1 flex h-[18px] w-[15px] shrink-0 items-center justify-center">
            <svg width="12" height="12" aria-hidden="true">
              <path d="M5 0h6v12H5v-2.500a3.500 3.500 0 0 0 0-7z" fill={LIGHT} />
              <path d="M4 2.800v6.400a3.200 3.200 0 0 1 0-6.400z" fill={LIGHT} />
            </svg>
          </button>
          <input aria-label="Gamma value" defaultValue="1.00" className="mt-px h-[14px] w-[38px] shrink-0 rounded-[2px] bg-[#2b2b2b] pt-px pl-[5px] text-[#ddd] outline-none" />
          <button aria-label="View transform" className="mx-[3px] flex size-[18px] shrink-0 items-center justify-center bg-[#5285a6]">
            <svg width="16" height="16" aria-hidden="true">
              <circle cx="8" cy="8" r="6.800" fill={TEAL} stroke="#28424e" strokeWidth="1" />
              <text x="8" y="10.500" textAnchor="middle" fontSize="6" fontWeight="700" fill="#234">ON</text>
            </svg>
          </button>
          <select aria-label="Color space" className="h-[18px] min-w-0 flex-1 appearance-none rounded-l-[2px] bg-[#5d5d5d] pt-px pl-[3px] text-[#c8c8c8] outline-none">
            <option>ACES 1.0 SDR-video (sRGB)</option>
          </select>
        </div>
        <div className="flex min-h-0 flex-1 flex-col items-center justify-between bg-[#5d5d5d]">
          <ViewCube />
          <FloorGrid />
        </div>
      </div>
    </main>
  )
}

function Section({ title, actions }: { title: string; actions: string[] }) {
  return (
    <section className="mb-1.5">
      <button className="mb-1.5 flex h-5 w-full items-center rounded-[2px] bg-[#5d5d5d] pl-2 font-semibold text-[#bbb]">
        <Down className="mb-1.5 text-[#eee]" />
        <span className="ml-[11px] pt-0.5">{title}</span>
      </button>
      <div className="flex flex-col gap-[5px] px-[30px]">
        {actions.map((a) => (
          <button key={a} className="h-6 rounded-[1px] border border-[#666] bg-[#5d5d5d] pt-0.5 text-[#eee]">
            {a}
          </button>
        ))}
      </div>
    </section>
  )
}

function CharacterControls() {
  return (
    <aside className="w-[285px] shrink-0">
      <div className="flex pt-[7px] pr-[10px] pl-[7px]">
        <button aria-label="Character menu" className="mt-px size-[39px]">
          <svg width="39" height="39" viewBox="0 0 39 39" fill="none" aria-hidden="true">
            <defs>
              <linearGradient id="ik" x2="0.300" y2="1">
                <stop stopColor="#0a9be6" />
                <stop offset="1" stopColor="#04283c" />
              </linearGradient>
            </defs>
            <rect x=".5" y=".5" width="38" height="38" rx="2" fill="url(#ik)" stroke="#1b2a33" />
            <path d="M18 1.500c9 9 9 25-3 31-4 2-9 3-14 2.500" stroke="#dfe9ee" strokeWidth="2" />
            <circle cx="4" cy="6" r="2.300" fill="#fff" />
            <path d="M1 9l4 0 11-3.500v1.700L7.500 11v6l4 13-2 1L4 20l-3 6z" fill="#fff" />
            <path d="M28 18h7.500L31.700 22z" fill="#fff" />
          </svg>
        </button>
        <div className="ml-auto grid grid-cols-[auto_152px] items-center justify-items-end gap-x-[5px] gap-y-[3px] text-[#bbb]">
          <label htmlFor="character">Character:</label>
          <Combo id="character" label="Character" value="None" className="h-[19px] w-full" />
          <label htmlFor="source" className="text-[#8a8a8a]">Source:</label>
          <Combo id="source" label="Source" value="None" dim className="h-[19px] w-full" />
        </div>
      </div>
      <div className="pt-[10px] pr-2 pl-[9px]">
        <Section
          title="Create"
          actions={['Create Skeleton', 'Create Control Rig', 'Create Character Definition', 'Create Custom Rig Mapping', 'Quick Rig Tool']}
        />
        <Section title="Import Samples" actions={['Import Human IK Example', 'Import Animation Example']} />
      </div>
    </aside>
  )
}

function SideTabs() {
  return (
    <div role="tablist" aria-orientation="vertical" className="flex w-4 shrink-0 flex-col gap-0.5 bg-[#373737] pt-0.5 whitespace-nowrap">
      {['Channel Box / Layer Editor', 'Attribute Editor', 'Modeling Toolkit', 'Human IK'].map((t) => (
        <button
          key={t}
          role="tab"
          aria-selected={t === 'Human IK'}
          className={clsx(
            'w-4 shrink-0 rounded-r-[3px] border border-l-0 pt-[13px] pb-[11px] leading-[14px] [writing-mode:vertical-rl]',
            t === 'Human IK' ? 'border-[#444] bg-[#444] text-[#eee]' : 'border-[#2b2b2b] bg-[#3a3a3a] text-[#999]',
          )}
        >
          {t}
        </button>
      ))}
    </div>
  )
}

const Rule = ({ vertical }: { vertical?: boolean }) => (
  <div className={clsx('shrink-0 bg-[#373737]', vertical ? 'w-0.5' : 'h-0.5')} />
)

export default function App() {
  return (
    <div className="relative h-screen overflow-hidden">
      <Desktop />
      <div className="relative h-full pt-[18px] pr-[15px] pl-[18px]">
        <div className="flex h-full flex-col overflow-hidden rounded-t-[8px] border-x border-[#0078d7] bg-[#444] pl-px font-['Open_Sans',sans-serif] text-[11px] leading-4">
          <div className="-ml-px shrink-0">
            <TitleBar />
          </div>
          <MenuBar />
          <StatusLine />
          <Rule />
          <Shelf />
          <Rule />
          <div className="flex min-h-0 flex-1">
            <Toolbox />
            <Rule vertical />
            <Outliner />
            <Rule vertical />
            <Viewport />
            <Rule vertical />
            <CharacterControls />
            <SideTabs />
          </div>
        </div>
      </div>
    </div>
  )
}
